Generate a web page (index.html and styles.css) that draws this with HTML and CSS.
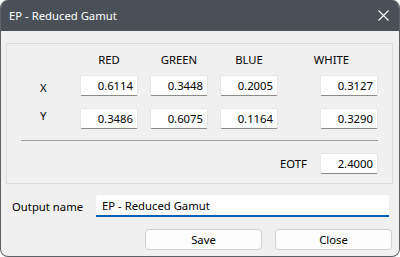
FILE: index.html
```html
<!DOCTYPE html>
<html lang="en">
<head>
    <meta charset="UTF-8">
    <title>EP - Reduced Gamut</title>
    <link rel="stylesheet" href="styles.css">
</head>
<body>
    <div class="window">
        <div class="title-bar">
            <span class="title">EP - Reduced Gamut</span>
            <svg class="close-icon" width="11" height="11" viewBox="0 0 11 11">
                <path d="M0.5 0.5 L10.5 10.5 M10.5 0.5 L0.5 10.5" stroke="#ffffff" stroke-width="1.1" fill="none"/>
            </svg>
        </div>

        <div class="content">
            <div class="group">
                <div class="grid">
                    <div></div>
                    <div class="head">RED</div>
                    <div class="head">GREEN</div>
                    <div class="head">BLUE</div>
                    <div></div>
                    <div class="head head-white">WHITE</div>

                    <div class="row-label">X</div>
                    <div class="field">0.6114</div>
                    <div class="field">0.3448</div>
                    <div class="field">0.2005</div>
                    <div></div>
                    <div class="field">0.3127</div>

                    <div class="row-label">Y</div>
                    <div class="field">0.3486</div>
                    <div class="field">0.6075</div>
                    <div class="field">0.1164</div>
                    <div></div>
                    <div class="field">0.3290</div>
                </div>

                <div class="separator"></div>

                <div class="eotf-row">
                    <span class="eotf-label">EOTF</span>
                    <div class="field">2.4000</div>
                </div>
            </div>

            <div class="output-row">
                <span class="output-label">Output name</span>
                <div class="text-input">EP - Reduced Gamut</div>
            </div>

            <div class="buttons">
                <button class="btn">Save</button>
                <button class="btn">Close</button>
            </div>
        </div>
    </div>
</body>
</html>
```

FILE: styles.css
```css
* {
    margin: 0;
    padding: 0;
    box-sizing: border-box;
}

body {
    background: #ffffff;
    font-family: "Noto Sans", "Open Sans", sans-serif;
    font-size: 11.3px;
    color: #000000;
}

.window {
    width: 400px;
    height: 257px;
    background: #f0f0f0;
    border: 1px solid #5d6267;
    border-top: none;
    border-radius: 8px;
    overflow: hidden;
    display: flex;
    flex-direction: column;
}

.title-bar {
    height: 31px;
    background: #4a5056;
    color: #ffffff;
    display: flex;
    align-items: center;
    justify-content: space-between;
    padding: 0 10px 0 8px;
}

.title {
    line-height: 16px;
}

.close-icon {
    display: block;
}

.content {
    flex: 1;
    padding: 12px 6px 0 5px;
}

.group {
    border: 1px solid #dcdcdc;
    height: 141px;
    padding-top: 8px;
}

.grid {
    display: grid;
    grid-template-columns: 61px 58px 58px 58px 18px 58px;
    column-gap: 12px;
    grid-template-rows: 16px 21px 21px;
    row-gap: 7px;
}

.grid .field:nth-child(n+13) {
    margin-top: 5px;
}

.head {
    text-align: center;
    line-height: 16px;
}

.head-white {
    margin-left: -35px;
}

.row-label {
    padding-left: 33px;
    line-height: 21px;
    padding-top: 2px;
}

.field {
    height: 21px;
    background: #ffffff;
    border: 1px solid #e6e6e6;
    border-bottom-color: #8a8a8a;
    border-radius: 2px;
    text-align: right;
    padding-right: 4px;
    line-height: 19px;
}

.separator {
    height: 1px;
    background: #a0a0a0;
    margin: 16px 14px 0 14px;
    width: 357px;
}

.eotf-row {
    display: flex;
    align-items: center;
    margin-top: 12px;
    padding-left: 273px;
}

.eotf-label {
    width: 40px;
}

.eotf-row .field {
    width: 58px;
}

.output-row {
    display: flex;
    align-items: center;
    margin-top: 11px;
    padding-left: 6px;
}

.output-label {
    width: 84px;
}

.text-input {
    width: 293px;
    height: 22px;
    background: #ffffff;
    border-bottom: 2px solid #005fb8;
    border-radius: 3px 3px 0 0;
    padding-left: 6px;
    line-height: 21px;
}

.buttons {
    display: flex;
    justify-content: flex-end;
    gap: 13px;
    margin-top: 12px;
    padding-right: 1px;
}

.btn {
    width: 117px;
    height: 21px;
    background: #fdfdfd;
    border: 1px solid #d0d0d0;
    border-radius: 4px;
    font-family: inherit;
    font-size: inherit;
    color: #000000;
}
```
